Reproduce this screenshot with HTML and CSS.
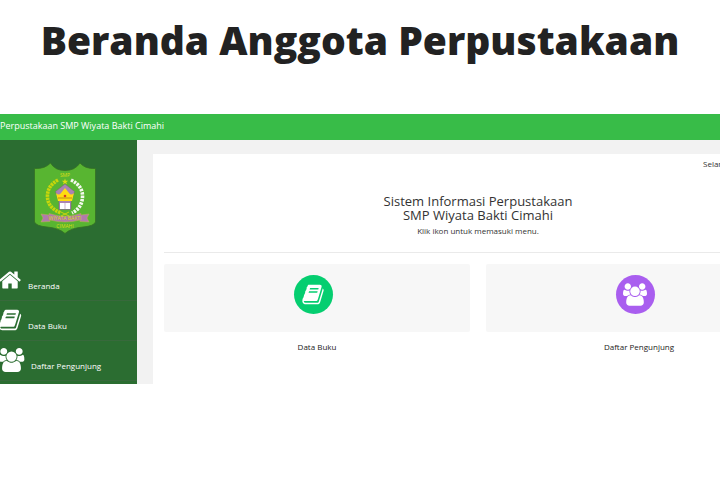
FILE: index.html
```html
<!DOCTYPE html>
<html lang="id">
<head>
<meta charset="utf-8">
<meta name="viewport" content="width=device-width, initial-scale=1">
<title>Beranda Anggota Perpustakaan</title>
<link rel="stylesheet" href="styles.css">
</head>
<body>
<svg class="sprite" aria-hidden="true">
  <symbol id="home" viewBox="0 0 1792 1792"><path d="M1472 992v480q0 26-19 45t-45 19h-384v-384h-256v384h-384q-26 0-45-19t-19-45v-480q0-1 .5-3t.5-3l575-474 575 474q1 2 1 6zm223-69l-62 74q-8 9-21 11h-3q-13 0-21-7l-692-577-692 577q-12 8-24 7-13-2-21-11l-62-74q-8-10-7-23.500t11-21.500l719-599q32-26 76-26t76 26l244 204v-195q0-14 9-23t23-9h192q14 0 23 9t9 23v408l219 182q10 8 11 21.500t-7 23.500z"/></symbol>
  <symbol id="book" viewBox="0 0 1792 1792"><path d="M1703 478q40 57 18 129l-275 906q-19 64-76.500 107.500t-122.500 43.500h-923q-77 0-148.500-53.500t-99.500-131.500q-24-67-2-127 0-4 3-27t4-37q1-8-3-21.500t-3-19.500q2-11 8-21t16.500-23.500 16.500-23.500q23-38 45-91.500t30-91.500q3-10 .5-30t-.5-28q3-11 17-28t17-23q21-36 42-92t25-90q1-9-2.500-32t.5-28q4-13 22-30.500t22-22.500q19-26 42.500-84.500t27.500-96.500q1-8-3-25.500t-2-26.500q2-8 9-18t18-23 17-21q8-12 16.500-30.500t15-35 16-36 19.500-32 26.500-23.500 36-11.500 47.500 5.500l-1 3q38-9 51-9h761q74 0 114 56t18 130l-274 906q-36 119-71.500 153.500t-128.500 34.500h-869q-27 0-38 15-11 16-1 43 24 70 144 70h923q29 0 56-15.500t35-41.500l300-987q7-22 5-57 38 15 59 43zm-1064 2q-4 13 2 22.500t20 9.500h608q13 0 25.500-9.500t16.500-22.500l21-64q4-13-2-22.500t-20-9.500h-608q-13 0-25.500 9.500t-16.500 22.500zm-83 256q-4 13 2 22.500t20 9.500h608q13 0 25.500-9.500t16.500-22.500l21-64q4-13-2-22.500t-20-9.500h-608q-13 0-25.500 9.500t-16.500 22.500z"/></symbol>
  <symbol id="group" viewBox="0 0 1920 1792"><path d="M593 896q-162 5-265 128h-134q-82 0-138-40.500t-56-118.500q0-353 124-353 6 0 43.500 21t97.500 42.500 119 21.500q67 0 133-23-5 37-5 66 0 139 81 256zm1071 637q0 120-73 189.500t-194 69.500h-874q-121 0-194-69.500t-73-189.500q0-53 3.500-103.500t14-109 26.500-108.500 43-97.500 62-81 85.500-53.500 111.500-20q10 0 43 21.500t73 48 107 48 135 21.500 135-21.500 107-48 73-48 43-21.500q61 0 111.500 20t85.500 53.500 62 81 43 97.500 26.500 108.500 14 109 3.500 103.500zm-1024-1277q0 106-75 181t-181 75-181-75-75-181 75-181 181-75 181 75 75 181zm704 384q0 159-112.500 271.500t-271.500 112.500-271.500-112.500-112.500-271.500 112.500-271.500 271.500-112.500 271.500 112.500 112.500 271.500zm576 225q0 78-56 118.500t-138 40.500h-134q-103-123-265-128 81-117 81-256 0-29-5-66 66 23 133 23 59 0 119-21.500t97.500-42.500 43.500-21q124 0 124 353zm-128-609q0 106-75 181t-181 75-181-75-75-181 75-181 181-75 181 75 75 181z"/></symbol>
</svg>

<h1 class="title">Beranda Anggota Perpustakaan</h1>

<div class="app">
  <header class="topbar">Perpustakaan SMP Wiyata Bakti Cimahi</header>
  <div class="body">
    <aside class="sidebar">
      <svg class="crest" viewBox="0 0 62 72" role="img" aria-label="SMP Wiyata Bakti Cimahi">
        <path d="M0.500 6.500Q11 7 16.500 1Q21 8.500 31 8.500Q41 8.500 46 1Q51 7 61.500 6.500V60Q60 64 49 65Q37 66 31 71.500Q25 66 13 65Q2 64 0.500 60Z" fill="#58b531" stroke="#356f25" stroke-width=".8"/>
        <text x="31" y="15" class="crest-text">SMP</text>
        <path d="M31 16.500l.8 2.200h2.400l-1.900 1.500.7 2.300-2-1.400-2 1.400.7-2.300-1.900-1.500h2.400z" fill="#d9dc14"/>
        <path d="M24 18Q13 24 13.500 35Q14 46 27 51" fill="none" stroke="#c8d60b" stroke-width="3.600" stroke-dasharray="2.400 .7"/>
        <path d="M37 18Q49 24 48.500 35Q48 46 38 51" fill="none" stroke="#f5f9ef" stroke-width="3.600" stroke-dasharray="2.400 1"/>
        <path d="M27 54l8-4M35 54l-8-4" stroke="#c8d60b" stroke-width="1"/>
        <path d="M31 22l9.500 7.500-3.500 10v8H25v-8l-3.500-10z" fill="#aa83b2" stroke="#75617f" stroke-width=".5"/>
        <path d="M22 31q3 3 5 0l4-5 4 5q2 3 5 0l-2 8H24z" fill="#ffdd10"/>
        <path d="M24 36h14" stroke="#ad7b22" stroke-width=".8"/>
        <circle cx="31" cy="34" r="1.300" fill="#d63c27"/>
        <path d="M26 41h4.700v6H26zM31.300 41H36v6h-4.700z" fill="#fff"/>
        <path d="M7 52l8 1v-1.500Q31 57 47 51.500V53l8-1-2 4 2 4-9-.5V58Q31 62 16 58v1.500L7 60l2-4z" fill="#b17bab" stroke="#c1b253" stroke-width=".5"/>
        <text x="31" y="58" class="crest-text">WIYATA BAKTI</text>
        <text x="31" y="66" class="crest-text">CIMAHI</text>
      </svg>
      <nav class="menu">
        <a href="#beranda"><svg class="menu-icon"><use href="#home"/></svg><span>Beranda</span></a>
        <a href="#buku"><svg class="menu-icon"><use href="#book"/></svg><span>Data Buku</span></a>
        <a href="#pengunjung"><svg class="menu-icon wide"><use href="#group"/></svg><span>Daftar Pengunjung</span></a>
      </nav>
    </aside>
    <main class="content">
      <section class="panel">
        <div class="greeting"><span>Selamat</span></div>
        <div class="intro">
          <h2>Sistem Informasi Perpustakaan<br>SMP Wiyata Bakti Cimahi</h2>
          <p>Klik ikon untuk memasuki menu.</p>
        </div>
        <div class="cards">
          <a class="card" href="#buku">
            <span class="tile"><span class="disc green"><svg><use href="#book"/></svg></span></span>
            <span>Data Buku</span>
          </a>
          <a class="card" href="#pengunjung">
            <span class="tile"><span class="disc purple"><svg><use href="#group"/></svg></span></span>
            <span>Daftar Pengunjung</span>
          </a>
        </div>
      </section>
    </main>
  </div>
</div>
</body>
</html>
```
FILE: styles.css
```css
* { box-sizing: border-box; }

body {
  margin: 0;
  background: #fff;
  color: #333;
  font: 8px/12px "Open Sans", "Noto Sans", sans-serif;
  overflow-x: hidden;
}

a { color: inherit; text-decoration: none; }
svg { display: block; fill: currentColor; }
.sprite { display: none; }

.title {
  margin: 0;
  padding: 16px 0 50px;
  color: #222;
  font: 800 39px/48px "Open Sans", Lato, sans-serif;
  text-align: center;
  white-space: nowrap;
}

.app { overflow: hidden; background: #f2f2f2; }

.topbar {
  padding: 3px 0 5px;
  background: #38bc48;
  color: #fff;
  font-size: 9px;
  line-height: 18px;
  white-space: nowrap;
}

.body { display: flex; }

.sidebar {
  flex: 0 0 137px;
  background: #2b6d31;
  color: #fff;
}

.crest { width: 62px; height: 72px; margin: 22px 0 27px 34px; }

.crest-text {
  fill: #d9dc14;
  font: 5px "Open Sans", sans-serif;
  text-anchor: middle;
}

.menu { padding-bottom: 3px; }

.menu a {
  display: flex;
  align-items: flex-end;
  gap: 6px;
  height: 40px;
  padding-bottom: 8px;
  border-bottom: 1px solid #38693c;
}

.menu-icon { width: 24px; height: 24px; margin-left: -2px; }
.menu-icon.wide { width: 27px; }

.content { flex: 1; min-width: 0; padding: 14px 0 0 16px; }

/* The panel runs on past the right edge of the window. */
.panel {
  height: 100%;
  margin-right: -84px;
  padding: 4px 12px 0 11px;
  background: #fff;
}

.greeting { display: flex; justify-content: flex-end; }
.greeting span { flex: 0 0 89px; }

.intro {
  padding: 24px 0 15px;
  border-bottom: 1px solid #eaeaea;
  text-align: center;
}

.intro h2 { margin: 0; font-size: 13px; font-weight: 400; line-height: 14px; }
.intro p { margin: 3px 0 0; }

.cards {
  display: grid;
  grid-template-columns: 1fr 1fr;
  gap: 16px;
  padding-top: 11px;
}

.card { color: #222; text-align: center; }

.tile {
  display: flex;
  justify-content: center;
  margin-bottom: 9px;
  padding: 11px 8px 18px 0;
  border-radius: 2px;
  background: #f7f7f7;
}

.disc {
  display: grid;
  place-items: center;
  width: 39px;
  height: 39px;
  border-radius: 50%;
  color: #fff;
}

.disc svg { width: 24px; height: 23px; }
.green { background: #05ce70; }
.purple { background: #a95eef; }
```
